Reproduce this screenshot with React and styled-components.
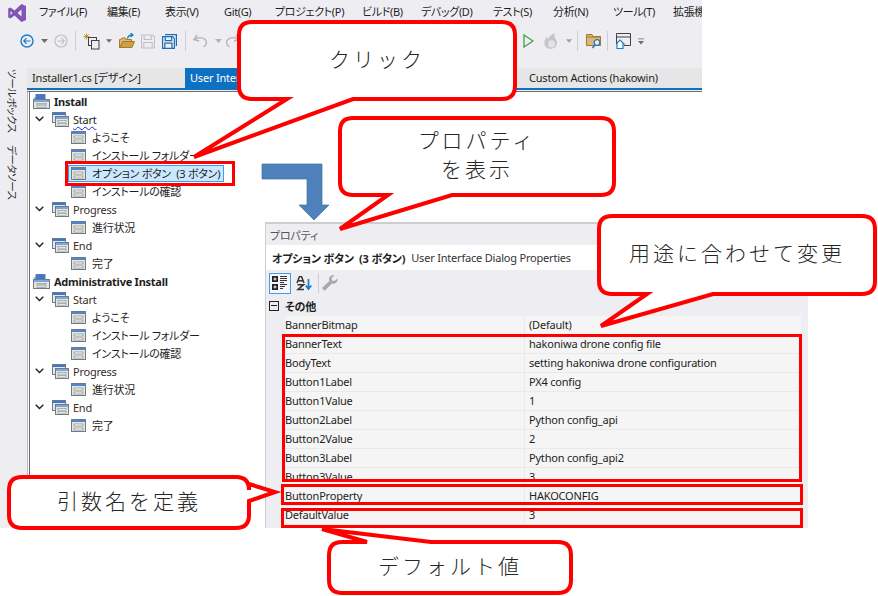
import React from "react";
import styled, { createGlobalStyle } from "styled-components";

const Global = createGlobalStyle`
  html, body { margin: 0; padding: 0; background: #fff; }
  body { font-family: "Noto Sans", "Noto Sans CJK JP", sans-serif; font-feature-settings: "palt"; color: #1e1e1e; }
`;

const Page = styled.div`
  position: relative;
  width: 878px;
  height: 596px;
  overflow: hidden;
  background: #fff;
`;

const Window = styled.div`
  width: 702px;
  height: 528px;
  background: #eeeef2;
  display: flex;
  flex-direction: column;
  overflow: hidden;
`;

const MenuBar = styled.div`
  height: 25px;
  flex: none;
  display: flex;
  align-items: center;
  padding-left: 7px;
  white-space: nowrap;
  overflow: hidden;
`;
const LogoSlot = styled.div`
  flex: none;
  width: 32px;
  height: 25px;
  display: flex;
  align-items: center;
`;
const MenuItem = styled.div`
  flex: none;
  width: ${(p) => p.$w}px;
  margin-bottom: 3px;
  font-size: 11px;
  letter-spacing: -0.35px;
  color: #1e1e1e;
`;

const ToolBar = styled.div`
  height: 43px;
  flex: none;
  box-sizing: border-box;
  display: flex;
  align-items: center;
  padding: 0 58px 11px 4px;
`;
const ToolGroup = styled.div`
  display: flex;
  align-items: center;
  height: 22px;
  margin-left: ${(p) => (p.$end ? "auto" : "0")};
`;
const Slot = styled.div`
  flex: none;
  width: ${(p) => p.$w}px;
  height: 22px;
  display: flex;
  align-items: center;
  justify-content: center;
`;
const Grip = styled.div`
  width: 5px;
  height: 17px;
  background-image: radial-gradient(#9a9aa2 0.6px, transparent 0.7px);
  background-size: 2px 2px;
`;
const Sep = styled.div`
  width: 1px;
  height: 20px;
  background: #ccced3;
`;

const Body = styled.div`
  flex: 1;
  display: flex;
  min-height: 0;
`;
const SideStrip = styled.div`
  width: 27px;
  flex: none;
  display: flex;
  flex-direction: column;
  align-items: center;
  gap: 12px;
  padding-top: 1px;
  box-sizing: border-box;
`;
const SideLabel = styled.div`
  writing-mode: vertical-rl;
  text-orientation: sideways;
  font-size: 10.5px;
  letter-spacing: -0.45px;
  color: #333;
  line-height: 14px;
  margin-right: 3px;
`;
const Main = styled.div`
  flex: 1;
  display: flex;
  flex-direction: column;
  min-width: 0;
`;
const TabRow = styled.div`
  height: 22px;
  flex: none;
  display: flex;
  border-bottom: 2px solid #0e70c0;
  box-sizing: border-box;
`;
const Tab = styled.div`
  flex: ${(p) => (p.$w ? "none" : "1")};
  width: ${(p) => (p.$w ? `${p.$w}px` : "auto")};
  background: ${(p) => (p.$active ? "#0e70c0" : "#e6e6e6")};
  color: ${(p) => (p.$active ? "#fff" : "#1e1e1e")};
  font-size: 11px;
  letter-spacing: -0.2px;
  line-height: 20px;
  padding-left: ${(p) => p.$pad}px;
  box-sizing: border-box;
  white-space: nowrap;
  overflow: hidden;
`;
const Designer = styled.div`
  flex: 1;
  margin-top: 1px;
  background: #fff;
  border-top: 1px solid #6d6d6d;
  border-left: 1px solid #b8b8bc;
  padding: 0 0 0 4px;
  position: relative;
  &::before {
    content: "";
    position: absolute;
    left: 1px;
    top: 0;
    bottom: 0;
    width: 1px;
    background: #6d6d6d;
  }
`;
const TreeRow = styled.div`
  height: 18px;
  display: flex;
  align-items: center;
  padding-left: ${(p) => p.$indent}px;
  font-size: 11px;
  letter-spacing: -0.25px;
  white-space: pre;
  font-weight: ${(p) => (p.$bold ? 700 : 400)};
  color: ${(p) => (p.$muted ? "#3a2a2a" : "#1e1e1e")};
`;
const Chevron = styled.span`
  width: 14px;
  margin-left: -20px;
  margin-right: 6px;
  display: inline-flex;
  justify-content: center;
  flex: none;
`;
const TreeText = styled.span`
  margin-left: ${(p) => p.$gap}px;
  ${(p) => (p.$wavy ? "text-decoration: underline wavy #2020e0 1px; text-underline-offset: 2px;" : "")}
`;
const Highlight = styled.span`
  display: inline-flex;
  align-items: center;
  height: 17px;
  box-sizing: border-box;
  margin-left: -3px;
  padding: 0 3px 0 2px;
  background: #cce8ff;
  border: 1px solid #3d9ef0;
`;

/* floating properties window */
const Props = styled.div`
  position: absolute;
  left: 265px;
  top: 222px;
  width: 543px;
  height: 306px;
  box-sizing: border-box;
  border: 1px solid #ccced3;
  border-width: 2px 0 0 1px;
  background: #eeeef2;
  display: flex;
  flex-direction: column;
`;
const PropsTitle = styled.div`
  height: 21px;
  flex: none;
  display: flex;
  align-items: center;
  padding: 0 8px 0 4px;
  gap: 8px;
  font-size: 11px;
  letter-spacing: -0.2px;
  color: #555;
`;
const DotGrip = styled.div`
  flex: 1;
  height: 5px;
  background-image: radial-gradient(#a8a8b0 0.6px, transparent 0.7px);
  background-size: 2px 2px;
`;
const PropsTarget = styled.div`
  height: 25px;
  flex: none;
  background: #fff;
  display: flex;
  align-items: center;
  padding-left: 6px;
  gap: 6px;
  font-size: 11px;
  letter-spacing: -0.2px;
  white-space: pre;
  color: #1e1e1e;
`;
const TargetName = styled.span`
  font-weight: 700;
`;
const TargetType = styled.span`
  color: #333;
`;
const PropsTools = styled.div`
  height: 26px;
  flex: none;
  display: flex;
  align-items: center;
  padding-left: 3px;
`;
const ToolToggle = styled.div`
  width: 22px;
  height: 21px;
  box-sizing: border-box;
  display: flex;
  align-items: center;
  justify-content: center;
  border: ${(p) => (p.$on ? "1px solid #3d9ef0" : "1px solid transparent")};
  background: ${(p) => (p.$on ? "#f7f7f9" : "transparent")};
  margin-right: ${(p) => p.$mr || 0}px;
`;
const CategoryRow = styled.div`
  height: 20px;
  flex: none;
  display: flex;
  align-items: center;
  padding-left: 3px;
  font-size: 11px;
  font-weight: 700;
  letter-spacing: -0.2px;
`;
const MinusBox = styled.span`
  width: 10px;
  height: 10px;
  box-sizing: border-box;
  border: 1px solid #222;
  position: relative;
  margin-right: 6px;
  flex: none;
  &::after {
    content: "";
    position: absolute;
    left: 1px;
    right: 1px;
    top: 3px;
    height: 1px;
    background: #222;
  }
`;
const PropGrid = styled.div`
  margin-left: 19px;
  margin-right: 7px;
`;
const PropRow = styled.div`
  height: 19px;
  box-sizing: border-box;
  display: grid;
  grid-template-columns: 240px 1fr;
  background: #f5f5f5;
  border-bottom: 1px solid #e9e9ec;
  font-size: 11px;
  letter-spacing: -0.2px;
  line-height: 18px;
  white-space: nowrap;
  color: #1e1e1e;
`;
const PropName = styled.div`
  border-right: 1px solid #e9e9ec;
`;
const PropValue = styled.div`
  padding-left: 4px;
`;

/* annotation layer */
const RedBox = styled.div`
  position: absolute;
  left: ${(p) => p.$x}px;
  top: ${(p) => p.$y}px;
  width: ${(p) => p.$w}px;
  height: ${(p) => p.$h}px;
  box-sizing: border-box;
  border: 3px solid #f00;
`;
const CalloutBox = styled.div`
  position: absolute;
  left: ${(p) => p.$x}px;
  top: ${(p) => p.$y}px;
  width: ${(p) => p.$w}px;
  height: ${(p) => p.$h}px;
  box-sizing: border-box;
  padding-bottom: 5px;
  display: flex;
  align-items: center;
  justify-content: center;
`;
const CalloutShape = styled.svg`
  position: absolute;
  left: 0;
  top: 0;
  overflow: visible;
`;
const CalloutText = styled.div`
  position: relative;
  font-family: "Noto Sans CJK JP", sans-serif;
  font-feature-settings: normal;
  font-weight: 300;
  font-size: 21px;
  letter-spacing: ${(p) => p.$ls ?? 3}px;
  line-height: 29px;
  text-align: center;
  color: #262626;
  white-space: pre-line;
`;
const BlueArrow = styled.svg`
  position: absolute;
  left: 260px;
  top: 162px;
`;

function calloutPath(w, h, t) {
  const i = 2, r = 13;
  const L = i, T = i, R = w - i, B = h - i;
  let top = `L${R - r} ${T}`;
  let right = `L${R} ${B - r}`;
  let bottom = `L${L + r} ${B}`;
  if (t.side === "top") top = `L${t.a} ${T} L${t.x} ${t.y} L${t.b} ${T} L${R - r} ${T}`;
  if (t.side === "right") right = `L${R} ${t.a} L${t.x} ${t.y} L${R} ${t.b} L${R} ${B - r}`;
  if (t.side === "bottom") bottom = `L${t.b} ${B} L${t.x} ${t.y} L${t.a} ${B} L${L + r} ${B}`;
  return `M${L + r} ${T} ${top} Q${R} ${T} ${R} ${T + r} ${right} Q${R} ${B} ${R - r} ${B} ${bottom} Q${L} ${B} ${L} ${B - r} L${L} ${T + r} Q${L} ${T} ${L + r} ${T} Z`;
}

function Callout({ x, y, w, h, tail, ls, children }) {
  return (
    <CalloutBox $x={x} $y={y} $w={w} $h={h}>
      <CalloutShape width={w} height={h}>
        <path d={calloutPath(w, h, tail)} fill="#fff" stroke="#f00" strokeWidth="4" strokeLinejoin="miter" strokeMiterlimit="4" />
      </CalloutShape>
      <CalloutText $ls={ls}>{children}</CalloutText>
    </CalloutBox>
  );
}

/* icons */
const Logo = () => (
  <svg width="20" height="20" viewBox="0 0 20 20">
    <path d="M14.5 1 L19 3 V17 L14.5 19 L7.5 12.5 L3.5 15.5 L1.2 14.5 V5.5 L3.5 4.5 L7.5 7.5 Z M14.5 6.5 L10.5 10 L14.5 13.5 Z M3.5 8 V12 L5.5 10 Z" fill="#7f55b5" fillRule="evenodd" />
  </svg>
);
const Caret = ({ c = "#6d6d70" }) => (
  <svg width="7" height="4" viewBox="0 0 7 4"><path d="M0 0H7L3.5 4Z" fill={c} /></svg>
);
const CircleArrow = ({ c, dir, sw = 1.2 }) => (
  <svg width="14" height="14" viewBox="0 0 14 14">
    <circle cx="7" cy="7" r="6" fill="none" stroke={c} strokeWidth={sw} />
    <path d={dir === "l" ? "M10.5 7H4M6.5 4.2L3.8 7L6.5 9.8" : "M3.5 7H10M7.5 4.2L10.2 7L7.5 9.8"} fill="none" stroke={c} strokeWidth="1.2" />
  </svg>
);
const NewProject = () => (
  <svg width="17" height="17" viewBox="0 0 17 17">
    <path d="M3.5 0.5V6.5M0.5 3.5H6.5M1.4 1.4L5.6 5.6M5.6 1.4L1.4 5.6" stroke="#c89a3a" strokeWidth="1" />
    <rect x="5.5" y="4.5" width="8" height="8" fill="#eeeef2" stroke="#424242" />
    <rect x="8.5" y="7.5" width="7.5" height="8.5" fill="#eeeef2" stroke="#424242" />
  </svg>
);
const OpenFolder = () => (
  <svg width="16" height="16" viewBox="0 0 16 16">
    <path d="M0.5 14.5V6.5H2L3 5H6.5L7 6.5H12.5V8.5H4L1 14.5Z" fill="#dcb67a" stroke="#a87c1e" />
    <path d="M1 14.5L3.8 8.5H15.5L13 14.5Z" fill="#c99f52" stroke="#a87c1e" />
    <path d="M8.5 5.5C9 3 10.5 2 13 2M11.5 0L14 2L11.5 4" fill="none" stroke="#1c7cc8" strokeWidth="1.3" />
  </svg>
);
const Floppy = ({ c, double }) => (
  <svg width="15" height="15" viewBox="0 0 15 15" fill="none" stroke={c} strokeWidth="1.2">
    {double && <path d="M3 0.6H14.4V12" />}
    <path d={double ? "M0.6 2.6H10.6L12.4 4.4V14.4H0.6Z" : "M0.6 0.6H12.4L14.4 2.6V14.4H0.6Z"} />
    <path d={double ? "M3.2 2.8V6.6H9.6V2.8M2.8 14.2V9.2H10V14.2" : "M3.4 0.8V5.4H11V0.8M3 14.2V8.6H12V14.2"} />
  </svg>
);
const Undo = () => (
  <svg width="15" height="14" viewBox="0 0 15 14" fill="none" stroke="#b4b4b8" strokeWidth="1.4">
    <path d="M4 1L1 5.5L6 7M1.8 5.3C5 3 10 3 12.5 6C14.5 8.5 13 11.5 10.5 13" />
  </svg>
);
const Redo = () => (
  <svg width="15" height="14" viewBox="0 0 15 14" fill="none" stroke="#b4b4b8" strokeWidth="1.4">
    <path d="M11 1L14 5.5L9 7M13.2 5.3C10 3 5 3 2.5 6C0.5 8.5 2 11.5 4.5 13" />
  </svg>
);
const Play = () => (
  <svg width="11" height="14" viewBox="0 0 11 14"><path d="M1 1L10 7L1 13Z" fill="none" stroke="#3f9c47" strokeWidth="1.3" /></svg>
);
const Flame = () => (
  <svg width="14" height="16" viewBox="0 0 14 16">
    <path d="M11 0C8 1 5 3 4.5 6C3.5 5.5 3.2 4.5 3.2 3.5C1 6 0 8 0.5 11C1 14 4 16 7 15.8C11 15.5 13.5 12.5 13 9C12.7 7 11.5 6 10.8 4.5C10.3 3 10.5 1.5 11 0Z" fill="#c6c6ca" />
    <ellipse cx="7.5" cy="10.8" rx="3.5" ry="3.6" fill="#e4e4e6" />
  </svg>
);
const FolderSearch = () => (
  <svg width="16" height="16" viewBox="0 0 16 16">
    <path d="M0.5 12.5V1.5H6L7 3.5H14.5V12.5Z" fill="#dcb67a" stroke="#a87c1e" />
    <path d="M1 4H14" stroke="#a87c1e" />
    <circle cx="11" cy="9.5" r="2.8" fill="#eeeef2" stroke="#1c7cc8" strokeWidth="1.2" />
    <path d="M9 11.8L6.5 15" stroke="#1c7cc8" strokeWidth="1.6" />
  </svg>
);
const HomeWindow = () => (
  <svg width="15" height="16" viewBox="0 0 15 16">
    <path d="M0.5 10V0.5H14.5V12.5H8M1 4H14" fill="none" stroke="#424242" />
    <path d="M0 11L4 7L8 11H7V15.5H1V11Z" fill="#fff" stroke="#1c7cc8" strokeWidth="1.2" />
  </svg>
);
const Overflow = () => (
  <svg width="7" height="7" viewBox="0 0 7 7"><path d="M0 0H7V1H0ZM0 3H7L3.5 7Z" fill="#6d6d70" /></svg>
);
const ChevronDown = () => (
  <svg width="9" height="6" viewBox="0 0 9 6"><path d="M0.7 0.7L4.5 4.5L8.3 0.7" fill="none" stroke="#222" strokeWidth="1.4" /></svg>
);
const DialogIcon = () => (
  <svg width="15" height="13" viewBox="0 0 15 13" style={{ flex: "none", display: "block" }}>
    <rect x="0.5" y="0.5" width="14" height="12" fill="#e9e6d4" stroke="#6f7a86" />
    <rect x="1" y="1" width="13" height="2" fill="#4f86cf" />
    <rect x="3" y="5" width="9" height="2" fill="#fff" stroke="#7b8794" strokeWidth="0.7" />
    <rect x="3" y="9" width="9" height="2" fill="#fff" stroke="#7b8794" strokeWidth="0.7" />
  </svg>
);
const GroupIcon = () => (
  <svg width="17" height="15" viewBox="0 0 17 15" style={{ flex: "none", display: "block" }}>
    <rect x="0.5" y="0.5" width="13" height="10" fill="#dfe8f5" stroke="#6f7a86" />
    <rect x="1" y="1" width="12" height="2" fill="#3f78c8" />
    <rect x="3.5" y="4.5" width="13" height="10" fill="#e9e6d4" stroke="#6f7a86" />
    <rect x="4" y="5" width="12" height="2" fill="#7ea6dc" />
    <rect x="6" y="8.5" width="8" height="1.6" fill="#fff" stroke="#7b8794" strokeWidth="0.6" />
    <rect x="6" y="11.5" width="8" height="1.6" fill="#fff" stroke="#7b8794" strokeWidth="0.6" />
  </svg>
);
const InstallIcon = () => (
  <svg width="17" height="15" viewBox="0 0 17 15" style={{ flex: "none", display: "block" }}>
    <rect x="1" y="3" width="4" height="4" fill="#8db2e4" />
    <rect x="3" y="0.5" width="9" height="7" fill="#3f78c8" stroke="#5a7fb0" />
    <rect x="0.5" y="5.5" width="16" height="9" fill="#e9e6d4" stroke="#6f7a86" />
    <rect x="1" y="6" width="15" height="2" fill="#7ea6dc" />
    <rect x="4" y="9.3" width="9" height="1.5" fill="#fff" stroke="#7b8794" strokeWidth="0.6" />
    <rect x="4" y="12" width="9" height="1.5" fill="#fff" stroke="#7b8794" strokeWidth="0.6" />
  </svg>
);
const CategorizedIcon = () => (
  <svg width="16" height="14" viewBox="0 0 16 14">
    <path d="M0 0H6V6H0ZM0 8H6V14H0Z" fill="#222" />
    <path d="M1.5 3H4.5M3 1.5V4.5M1.5 11H4.5M3 9.5V12.5" stroke="#fff" />
    <path d="M8 0.5H15M8 2.5H15M8 4.5H15M8 6.5H12M8 8.5H15M8 10.5H13M8 12.5H11" stroke="#333" />
  </svg>
);
const SortIcon = () => (
  <svg width="16" height="15" viewBox="0 0 16 15">
    <path d="M1 7L3.5 0.5H5.5L8 7M2.5 4.8H6.5" fill="none" stroke="#333" strokeWidth="1.5" />
    <path d="M1.5 8.7H7.5L2 13.5H8" fill="none" stroke="#333" strokeWidth="1.6" />
    <path d="M12.5 3V13M9.8 9.5L12.5 13L15.2 9.5" fill="none" stroke="#1c7cc8" strokeWidth="1.7" />
  </svg>
);
const Wrench = () => (
  <svg width="16" height="16" viewBox="0 0 16 16">
    <path d="M15.5 3.5L12.5 6L10 5.5L9.5 3L12.5 0.5C10 -0.5 7 1 7 4C7 4.8 7.2 5.5 7.4 6L0.5 12.5C-0.3 13.5 2 16.3 3.2 15.3L10 8.6C13 9.5 16.3 7 15.5 3.5Z" fill="#a9a9ad" />
  </svg>
);

/* data */
const menus = [
  ["ファイル(F)", 68], ["編集(E)", 58], ["表示(V)", 59], ["Git(G)", 51], ["プロジェクト(P)", 87],
  ["ビルド(B)", 59], ["デバッグ(D)", 72], ["テスト(S)", 60], ["分析(N)", 60], ["ツール(T)", 60], ["拡張機能(X)", 70],
];
const tree = [
  { t: "root", label: "Install" },
  { t: "group", label: "Start", wavy: true },
  { t: "item", label: "ようこそ" },
  { t: "item", label: "インストール フォルダー" },
  { t: "item", label: "オプション ボタン  (3 ボタン)", selected: true },
  { t: "item", label: "インストールの確認" },
  { t: "group", label: "Progress" },
  { t: "item", label: "進行状況" },
  { t: "group", label: "End" },
  { t: "item", label: "完了" },
  { t: "root", label: "Administrative Install" },
  { t: "group", label: "Start" },
  { t: "item", label: "ようこそ" },
  { t: "item", label: "インストール フォルダー" },
  { t: "item", label: "インストールの確認" },
  { t: "group", label: "Progress" },
  { t: "item", label: "進行状況" },
  { t: "group", label: "End" },
  { t: "item", label: "完了" },
];
const props = [
  ["BannerBitmap", "(Default)"],
  ["BannerText", "hakoniwa drone config file"],
  ["BodyText", "setting hakoniwa drone configuration"],
  ["Button1Label", "PX4 config"],
  ["Button1Value", "1"],
  ["Button2Label", "Python config_api"],
  ["Button2Value", "2"],
  ["Button3Label", "Python config_api2"],
  ["Button3Value", "3"],
  ["ButtonProperty", "HAKOCONFIG"],
  ["DefaultValue", "3"],
];

function TreeLine({ n }) {
  if (n.t === "root") {
    return (
      <TreeRow $indent={1} $bold>
        <InstallIcon />
        <TreeText $gap={4}>{n.label}</TreeText>
      </TreeRow>
    );
  }
  if (n.t === "group") {
    return (
      <TreeRow $indent={20} $muted={!n.wavy}>
        <Chevron><ChevronDown /></Chevron>
        <GroupIcon />
        <TreeText $gap={4} $wavy={n.wavy}>{n.label}</TreeText>
      </TreeRow>
    );
  }
  if (n.selected) {
    return (
      <TreeRow $indent={39}>
        <Highlight>
          <DialogIcon />
          <TreeText $gap={6}>{n.label}</TreeText>
        </Highlight>
      </TreeRow>
    );
  }
  return (
    <TreeRow $indent={39}>
      <DialogIcon />
      <TreeText $gap={6}>{n.label}</TreeText>
    </TreeRow>
  );
}

export default function App() {
  return (
    <Page>
      <Global />
      <Window>
        <MenuBar>
          <LogoSlot><Logo /></LogoSlot>
          {menus.map(([m, w]) => <MenuItem key={m} $w={w}>{m}</MenuItem>)}
        </MenuBar>
        <ToolBar>
          <ToolGroup>
            <Slot $w={10}><Grip /></Slot>
            <Slot $w={26}><CircleArrow c="#1c7cc8" dir="l" sw={1.4} /></Slot>
            <Slot $w={8}><Caret /></Slot>
            <Slot $w={26}><CircleArrow c="#c0c0c4" dir="r" /></Slot>
            <Slot $w={2}><Sep /></Slot>
            <Slot $w={30}><NewProject /></Slot>
            <Slot $w={6}><Caret /></Slot>
            <Slot $w={29}><OpenFolder /></Slot>
            <Slot $w={14}><Floppy c="#c0c0c4" /></Slot>
            <Slot $w={29}><Floppy c="#1c6fb8" double /></Slot>
            <Slot $w={2}><Sep /></Slot>
            <Slot $w={28}><Undo /></Slot>
            <Slot $w={8}><Caret c="#b4b4b8" /></Slot>
            <Slot $w={20}><Redo /></Slot>
          </ToolGroup>
          <ToolGroup $end>
            <Slot $w={16}><Play /></Slot>
            <Slot $w={30}><Flame /></Slot>
            <Slot $w={6}><Caret c="#a0a0a4" /></Slot>
            <Slot $w={10}><Sep /></Slot>
            <Slot $w={24}><FolderSearch /></Slot>
            <Slot $w={2}><Sep /></Slot>
            <Slot $w={30}><HomeWindow /></Slot>
            <Slot $w={6}><Overflow /></Slot>
          </ToolGroup>
        </ToolBar>
        <Body>
          <SideStrip>
            <SideLabel>ツールボックス</SideLabel>
            <SideLabel>データソース</SideLabel>
          </SideStrip>
          <Main>
            <TabRow>
              <Tab $w={158} $pad={5}>Installer1.cs [デザイン]</Tab>
              <Tab $w={170} $pad={5} $active>User Interface (hakowin)</Tab>
              <Tab $w={160} $pad={5} />
              <Tab $pad={14}>Custom Actions (hakowin)</Tab>
            </TabRow>
            <Designer>
              {tree.map((n, i) => <TreeLine key={i} n={n} />)}
            </Designer>
          </Main>
        </Body>
      </Window>

      <BlueArrow width="72" height="60" viewBox="0 0 72 60">
        <path d="M2 2H62V43H69L54 58L39 43H47V17H2Z" fill="#4f81bd" stroke="#41719c" strokeWidth="0.7" />
      </BlueArrow>

      <Props>
        <PropsTitle>プロパティ<DotGrip /></PropsTitle>
        <PropsTarget>
          <TargetName>オプション ボタン  (3 ボタン)</TargetName>
          <TargetType>User Interface Dialog Properties</TargetType>
        </PropsTarget>
        <PropsTools>
          <ToolToggle $on $mr={2}><CategorizedIcon /></ToolToggle>
          <ToolToggle $mr={3}><SortIcon /></ToolToggle>
          <Sep />
          <ToolToggle><Wrench /></ToolToggle>
        </PropsTools>
        <CategoryRow><MinusBox />その他</CategoryRow>
        <PropGrid>
          {props.map(([k, v]) => (
            <PropRow key={k}>
              <PropName>{k}</PropName>
              <PropValue>{v}</PropValue>
            </PropRow>
          ))}
        </PropGrid>
      </Props>

      <RedBox $x={65} $y={161} $w={170} $h={25} />
      <RedBox $x={282} $y={334} $w={520} $h={148} />
      <RedBox $x={281} $y={484} $w={522} $h={21} />
      <RedBox $x={281} $y={508} $w={522} $h={20} />

      <Callout x={237} y={20} w={280} h={81} tail={{ side: "bottom", a: 50, b: 116, x: -43, y: 137 }}>クリック</Callout>
      <Callout x={338} y={116} w={278} h={81} tail={{ side: "bottom", a: 50, b: 114, x: 2, y: 113 }}>{"プロパティ\nを表示"}</Callout>
      <Callout x={597} y={214} w={280} h={82} tail={{ side: "bottom", a: 50, b: 116, x: 4, y: 112 }}>用途に合わせて変更</Callout>
      <Callout x={7} y={475} w={244} h={55} tail={{ side: "right", a: 9, b: 26, x: 268, y: 17 }}>引数名を定義</Callout>
      <Callout x={327} y={540} w={246} h={55} tail={{ side: "top", a: 40, b: 104, x: -5, y: -11 }}>デフォルト値</Callout>
    </Page>
  );
}
